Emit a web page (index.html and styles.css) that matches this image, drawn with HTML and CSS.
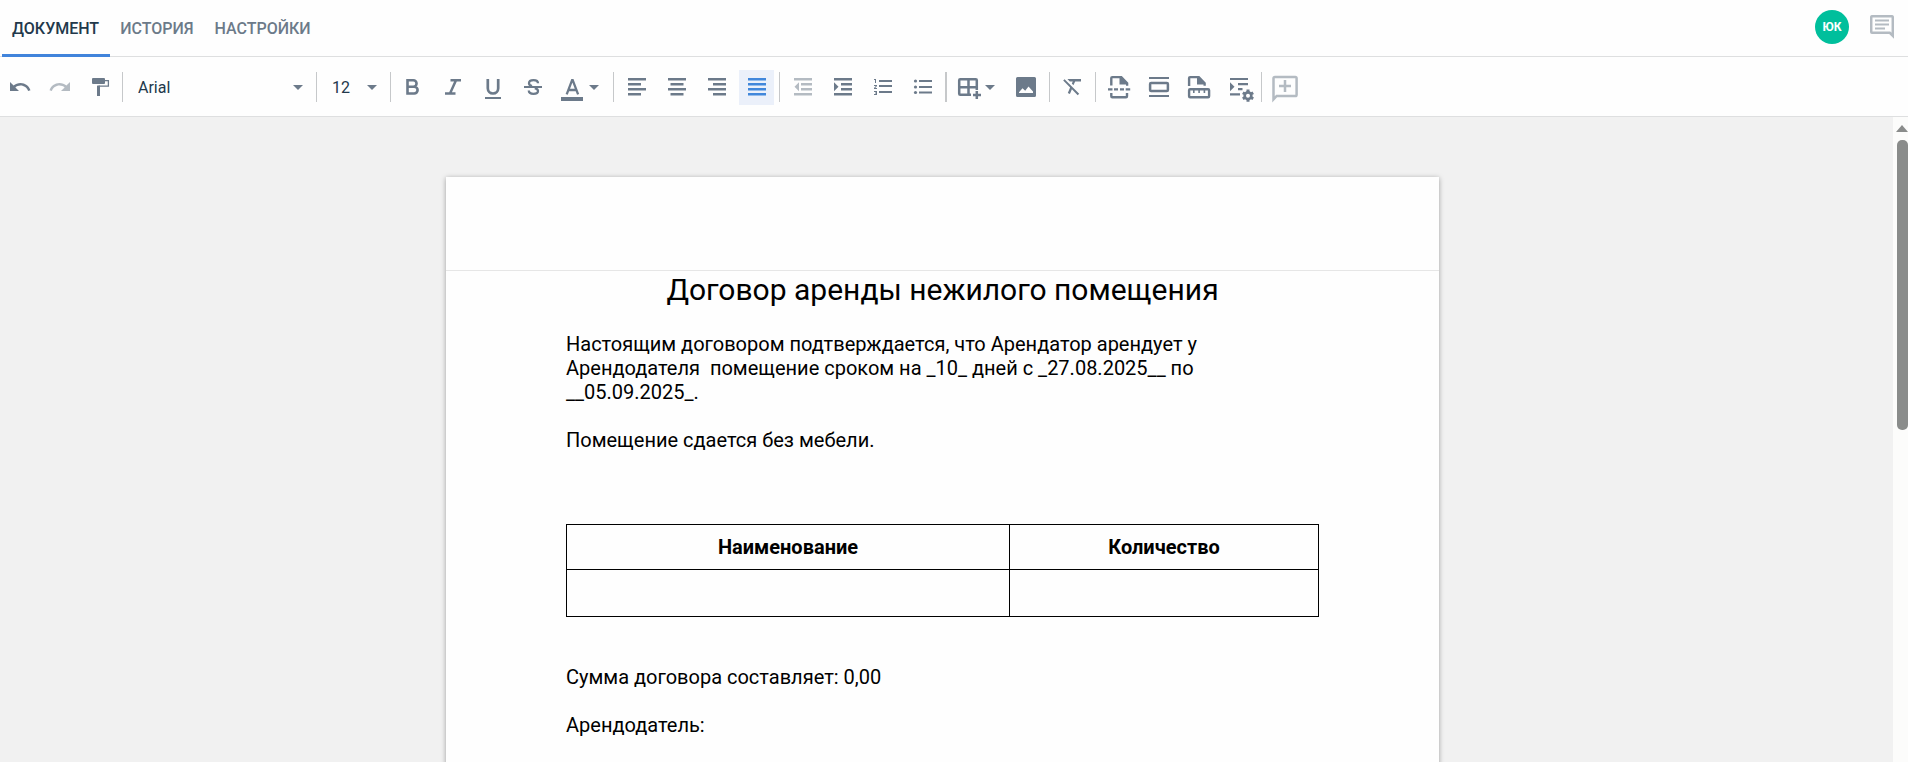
FILE: index.html
```html
<!DOCTYPE html>
<html lang="ru">
<head>
<meta charset="utf-8">
<meta name="viewport" content="width=device-width, initial-scale=1">
<title>Договор аренды нежилого помещения</title>
<link rel="stylesheet" href="styles.css">
</head>
<body>
<header class="topbar">
  <nav class="tabs">
    <a class="tab tab-active" href="#document">ДОКУМЕНТ</a>
    <a class="tab" href="#history">ИСТОРИЯ</a>
    <a class="tab" href="#settings">НАСТРОЙКИ</a>
  </nav>
  <div class="account">
    <button class="avatar" type="button">ЮК</button>
    <button class="chat" type="button" aria-label="Комментарии">
      <svg class="chat-icon" viewBox="0 0 24 24"><path d="M2.500 1.200h19q1.300 0 1.300 1.300v18.300l-3-3H2.500q-1.300 0-1.300-1.300v-14q0-1.300 1.300-1.300z" fill="none" stroke="currentColor" stroke-width="2.500"/><path d="M5 5.500h14M5 9.500h14M5 13.500h10" fill="none" stroke="currentColor" stroke-width="2"/></svg>
    </button>
  </div>
</header>

<div class="toolbar" role="toolbar" aria-label="Форматирование">
  <button class="tool" type="button" aria-label="Отменить"><svg class="icon" viewBox="0 0 35 35"><path transform="translate(6 5)" d="M12.500 8c-2.650 0-5.050.990-6.900 2.600L2 7v9h9l-3.620-3.620c1.390-1.160 3.160-1.880 5.120-1.880 3.540 0 6.550 2.310 7.600 5.500l2.370-.780C21.080 11.030 17.150 8 12.500 8z"/></svg></button>
  <button class="tool" type="button" aria-label="Повторить" disabled><svg class="icon" viewBox="0 0 35 35"><path transform="translate(6 5)" d="M18.400 10.600C16.550 8.990 14.150 8 11.500 8c-4.650 0-8.580 3.030-9.960 7.220L3.900 16c1.050-3.190 4.050-5.500 7.600-5.500 1.950 0 3.730.720 5.120 1.880L13 16h9V7l-3.600 3.600z"/></svg></button>
  <button class="tool" type="button" aria-label="Копировать формат"><svg class="icon" viewBox="0 0 35 35"><rect x="10" y="8" width="13" height="6" rx="1"/><path class="line" stroke-width="1.300" d="M23 10.600h3.400v5.600H16.500"/><rect x="15" y="15.600" width="3" height="10.400"/></svg></button>
  <span class="sep"></span>
  <label class="picker picker-font">
    <select class="picker-field" aria-label="Шрифт"><option>Arial</option></select>
    <svg class="picker-arrow" viewBox="0 0 10 5"><path d="M0 0h10L5 5z"/></svg>
  </label>
  <span class="sep"></span>
  <label class="picker picker-size">
    <select class="picker-field" aria-label="Размер шрифта"><option>12</option></select>
    <svg class="picker-arrow" viewBox="0 0 10 5"><path d="M0 0h10L5 5z"/></svg>
  </label>
  <span class="sep"></span>
  <button class="tool" type="button" aria-label="Полужирный"><svg class="icon" viewBox="0 0 35 35"><path class="line" stroke-width="2.600" d="M11.500 10.200h5.800a3.250 3.250 0 0 1 0 6.500h-5.800zM11.500 16.700h6.700a3.400 3.400 0 0 1 0 6.800h-6.700z"/></svg></button>
  <button class="tool" type="button" aria-label="Курсив"><svg class="icon" viewBox="0 0 35 35"><path class="line" stroke-width="2.500" d="M14.500 10.200H25M9 23.500h10.500M20 10.200l-6 13.300"/></svg></button>
  <button class="tool" type="button" aria-label="Подчёркнутый"><svg class="icon" viewBox="0 0 35 35"><path class="line" stroke-width="2.700" d="M11.800 9v9.300a5 5 0 0 0 10.400 0V9"/><rect x="9" y="27" width="16" height="2"/></svg></button>
  <button class="tool" type="button" aria-label="Зачёркнутый"><svg class="icon" viewBox="0 0 35 35"><path class="line" stroke-width="2.300" d="M22 13.300c0-2-1.800-3.200-4.500-3.200s-4.500 1.200-4.500 3.100c0 1.600 1.200 2.400 3 2.900M18.800 18.200c2 .6 3.200 1.400 3.200 2.800 0 1.800-1.800 2.800-4.500 2.800s-4.700-1.300-4.700-3.300"/><rect x="8" y="16" width="18" height="2"/></svg></button>
  <button class="tool tool-wide" type="button" aria-label="Цвет текста"><svg class="icon" viewBox="0 0 52 35"><path class="line" stroke-width="2.300" d="M10.700 24.300l5.400-14.200h.6l5.400 14.200M12.500 20h7.800"/><rect x="5" y="27" width="22" height="4"/><path d="M33 15h10l-5 5z"/></svg></button>
  <span class="sep"></span>
  <button class="tool" type="button" aria-label="По левому краю"><svg class="icon" viewBox="0 0 35 35"><path class="line" stroke-width="2.600" d="M9 9.300h18M9 14.300h13M9 19.300h18M9 24.300h13"/></svg></button>
  <button class="tool" type="button" aria-label="По центру"><svg class="icon" viewBox="0 0 35 35"><path class="line" stroke-width="2.600" d="M9 9.300h18M11.500 14.300h13M9 19.300h18M11.500 24.300h13"/></svg></button>
  <button class="tool" type="button" aria-label="По правому краю"><svg class="icon" viewBox="0 0 35 35"><path class="line" stroke-width="2.600" d="M9 9.300h18M14 14.300h13M9 19.300h18M14 24.300h13"/></svg></button>
  <button class="tool tool-on" type="button" aria-label="По ширине" aria-pressed="true"><svg class="icon" viewBox="0 0 35 35"><path class="line" stroke-width="2.600" d="M9 9.300h18M9 14.300h18M9 19.300h18M9 24.300h18"/></svg></button>
  <span class="sep"></span>
  <button class="tool" type="button" aria-label="Уменьшить отступ" disabled><svg class="icon" viewBox="0 0 35 35"><path class="line" stroke-width="2.600" d="M9 9.300h18M16 14.300h11M16 19.300h11M9 24.300h18"/><path d="M14 12.300v9l-4.500-4.500z"/></svg></button>
  <button class="tool" type="button" aria-label="Увеличить отступ"><svg class="icon" viewBox="0 0 35 35"><path class="line" stroke-width="2.600" d="M9 9.300h18M16 14.300h11M16 19.300h11M9 24.300h18"/><path d="M9 12.300v9l4.500-4.500z"/></svg></button>
  <button class="tool" type="button" aria-label="Нумерованный список"><svg class="icon" viewBox="0 0 35 35"><path transform="translate(7 5)" d="M2 17h2v.5H3v1h1v.5H2v1h3v-4H2v1zm1-9h1V4H2v1h1v3zm-1 3h1.800L2 13.100v.9h3v-1H3.200L5 10.900V10H2v1zm5-6v2h13V5H7zm0 13h13v-2H7v2zm0-6h13v-2H7v2z"/></svg></button>
  <button class="tool" type="button" aria-label="Маркированный список"><svg class="icon" viewBox="0 0 35 35"><circle cx="10.500" cy="11" r="1.600"/><circle cx="10.500" cy="17" r="1.600"/><circle cx="10.500" cy="22.500" r="1.600"/><path class="line" stroke-width="2" d="M14 11h13M14 17h13M14 22.500h13"/></svg></button>
  <span class="sep sep-bold"></span>
  <button class="tool tool-wide" type="button" aria-label="Таблица"><svg class="icon" viewBox="0 0 52 35"><path class="line" stroke-width="2.500" d="M19 24.800H8.200q-1 0-1-1V10.200q0-1 1-1h15.600q1 0 1 1V20M16.500 9v16M7 17.200h18M24.800 21v8M21 25h8"/><path d="M33 15h10l-5 5z"/></svg></button>
  <button class="tool" type="button" aria-label="Изображение"><svg class="icon" viewBox="0 0 35 35"><path fill-rule="evenodd" d="M8.500 7h17q1.500 0 1.500 1.500v17q0 1.500-1.500 1.500h-17Q7 27 7 25.500v-17Q7 7 8.500 7zM10 23h14v-1.500l-4.500-5-3.300 4.300-2.700-2.600-3.500 4z"/></svg></button>
  <span class="sep"></span>
  <button class="tool" type="button" aria-label="Очистить формат"><svg class="icon" viewBox="0 0 35 35"><path transform="translate(6 4)" d="M3.600 5.200L2.200 6.600l6.900 6.900L6.800 19l2.100 1 2-4.700 5.800 5.900 1.500-1.500zM6.400 5l2.400 2.400h3l-1 2.100 1.600 1.700 1.800-3.800H20V5z"/></svg></button>
  <span class="sep"></span>
  <button class="tool" type="button" aria-label="Разрыв страницы"><svg class="icon" viewBox="0 0 35 35"><path class="line" stroke-width="2.400" d="M10.300 15.500V8.100q0-1 1-1H20M10.300 23v3.200q0 1 1 1H25q1 0 1-1V23"/><path d="M18.500 6h2.300l6.500 6.700v3H25v-1.300h-6.500z"/><path class="line" stroke-width="2.200" d="M7 19.300h4.500M13 19.300h4M19 19.300h4M24.700 19.300h4.500"/></svg></button>
  <button class="tool" type="button" aria-label="Колонтитулы"><svg class="icon" viewBox="0 0 35 35"><path d="M8 7h20v2H8zM8 25h20v2H8z"/><rect class="line" stroke-width="2.500" x="9.100" y="13.100" width="17.800" height="7.800" rx="1"/></svg></button>
  <button class="tool" type="button" aria-label="Поля страницы"><svg class="icon" viewBox="0 0 35 35"><path class="line" stroke-width="2.400" d="M8.100 16V8.100q0-1 1-1h8.400"/><path d="M16 6h2.300l6.500 6.700v3h-2.300v-1.300H16z"/><rect class="line" stroke-width="2.400" x="8.100" y="19.300" width="20" height="7.900" rx="1"/><path class="line" stroke-width="1.600" d="M12.800 19v4M18.100 19v4M23.400 19v4"/></svg></button>
  <button class="tool" type="button" aria-label="Настройки абзаца"><svg class="icon" viewBox="0 0 35 35"><path class="line" stroke-width="2.200" d="M9 9h18M17 14.200h10M17 19.200h4.500M9 24.300h10"/><path d="M9 12.300v9l4.500-4.500z"/><circle class="line" stroke-width="2.600" cx="27" cy="25.700" r="3.300"/><path class="line" stroke-width="3" d="M27 19.600v2.400M27 29.400v2.400M21.800 22.700l2 1.100M30.200 27.600l2 1.100M21.800 28.700l2-1.100M30.200 23.800l2-1.100"/></svg></button>
  <span class="sep"></span>
  <button class="tool" type="button" aria-label="Добавить комментарий" disabled><svg class="icon" viewBox="0 0 35 35"><path class="line" stroke-width="2.500" d="M8 7h20.300q1.300 0 1.300 1.300v16.400q0 1.300-1.300 1.300H9.700l-3.200 3.300V8.300Q6.500 7 8 7zM18 10v12M12 16h12"/></svg></button>
</div>

<div class="workspace">
  <main class="canvas">
    <article class="page">
      <div class="page-header"></div>
      <div class="page-body">
        <h1 class="doc-title">Договор аренды нежилого помещения</h1>
        <p class="para">Настоящим договором подтверждается, что Арендатор арендует у Арендодателя&nbsp; помещение сроком на _10_ дней с _27.08.2025__ по __05.09.2025_.</p>
        <p class="para">Помещение сдается без мебели.</p>
        <table class="goods">
          <thead><tr><th class="cell cell-head cell-name">Наименование</th><th class="cell cell-head">Количество</th></tr></thead>
          <tbody><tr><td class="cell"></td><td class="cell"></td></tr></tbody>
        </table>
        <p class="para">Сумма договора составляет: 0,00</p>
        <p class="para">Арендодатель:</p>
      </div>
    </article>
  </main>
  <div class="scrollbar" aria-hidden="true">
    <svg class="scroll-arrow" viewBox="0 0 12 7"><path d="M6 0l6 7H0z"/></svg>
    <div class="scroll-thumb"></div>
  </div>
</div>
</body>
</html>
```
FILE: styles.css
```css
* {
  box-sizing: border-box;
}

body {
  margin: 0;
  height: 100vh;
  display: flex;
  flex-direction: column;
  overflow: hidden;
  background: #fefefe;
  color: #000;
  font-family: Roboto, "Liberation Sans", sans-serif;
}

button {
  padding: 0;
  border: 0;
  background: none;
  font: inherit;
  cursor: pointer;
}

/* Top bar */
.topbar {
  flex: none;
  display: flex;
  justify-content: space-between;
  align-items: flex-start;
  height: 57px;
  padding: 0 14px 0 2px;
  border-bottom: 1px solid #dedfe0;
}

.tabs {
  display: flex;
}

.tab {
  height: 57px;
  padding: 0 11px 0 10px;
  border-bottom: 3px solid transparent;
  color: #6c7a89;
  font-size: 16px;
  font-weight: 500;
  line-height: 58px;
  text-decoration: none;
}

.tab-active {
  border-bottom-color: #4184db;
  color: #22384b;
}

.account {
  display: flex;
  align-items: center;
  gap: 21px;
  height: 54px;
}

.avatar {
  width: 34px;
  height: 34px;
  border-radius: 50%;
  background: #00bf9c;
  color: #fff;
  font-size: 12px;
  font-weight: 700;
}

.chat {
  display: flex;
  color: #b4bbc2;
}

.chat-icon {
  width: 24px;
  height: 24px;
}

/* Toolbar */
.toolbar {
  flex: none;
  display: flex;
  align-items: center;
  gap: 5px;
  padding: 13px 2px 11px;
  border-bottom: 1px solid #dedfe0;
}

.tool {
  flex: none;
  display: flex;
  width: 35px;
  height: 35px;
  color: #6c7a8a;
}

.tool-wide {
  width: 52px;
}

.tool-on {
  background: #ebf0fa;
  color: #4187db;
}

.tool:disabled {
  color: #b4bbc2;
}

.icon {
  width: 100%;
  height: 100%;
  fill: currentColor;
}

.line {
  fill: none;
  stroke: currentColor;
}

.sep {
  flex: none;
  width: 1px;
  height: 30px;
  margin-bottom: 1px;
  background: #c6c8ca;
}

.sep-bold {
  width: 2px;
}

.picker {
  flex: none;
  display: flex;
  align-items: center;
  height: 35px;
  padding: 0 8px 0 10px;
}

.picker-font {
  width: 183px;
}

.picker-size {
  width: 63px;
}

.picker-field {
  flex: 1;
  min-width: 0;
  padding: 0;
  border: 0;
  appearance: none;
  background: none;
  color: #22384b;
  font: inherit;
  font-size: 16px;
}

.picker-arrow {
  flex: none;
  width: 10px;
  height: 5px;
  fill: #6c7a8a;
}

/* Workspace */
.workspace {
  flex: 1;
  display: flex;
  min-height: 0;
}

.canvas {
  flex: 1;
  display: flex;
  justify-content: center;
  min-width: 0;
  padding: 60px 8px 0 0;
  overflow: hidden;
  background: #f1f1f1;
}

.page {
  width: 100%;
  max-width: 993px;
  min-height: 1403px;
  background: #fefefe;
  box-shadow: 0 1px 5px rgba(0, 0, 0, 0.35);
}

.page-header {
  height: 94px;
  border-bottom: 1px solid #e6e6e6;
}

.page-body {
  padding: 1px 120px 120px;
}

.doc-title {
  margin: 0 0 24px;
  font-size: 30px;
  font-weight: 400;
  line-height: 36px;
  text-align: center;
}

.para {
  margin: 0 0 24px;
  font-size: 20px;
  line-height: 24px;
}

.goods {
  width: 100%;
  margin: 72px 0 48px;
  border-collapse: collapse;
  font-size: 20px;
  line-height: 24px;
}

.cell {
  height: 47px;
  padding: 0 8px;
  border: 1px solid #000;
}

.cell-head {
  height: 45px;
}

.cell-name {
  width: 443px;
}

/* Scrollbar */
.scrollbar {
  flex: none;
  display: flex;
  flex-direction: column;
  align-items: flex-end;
  gap: 8px;
  width: 15px;
  padding-top: 8px;
  overflow: hidden;
  background: #fcfcfb;
}

.scroll-arrow {
  flex: none;
  width: 12px;
  height: 7px;
  fill: #8a8c8b;
}

.scroll-thumb {
  width: 11px;
  height: 290px;
  border-radius: 5px;
  background: #8a8c8b;
}
```
